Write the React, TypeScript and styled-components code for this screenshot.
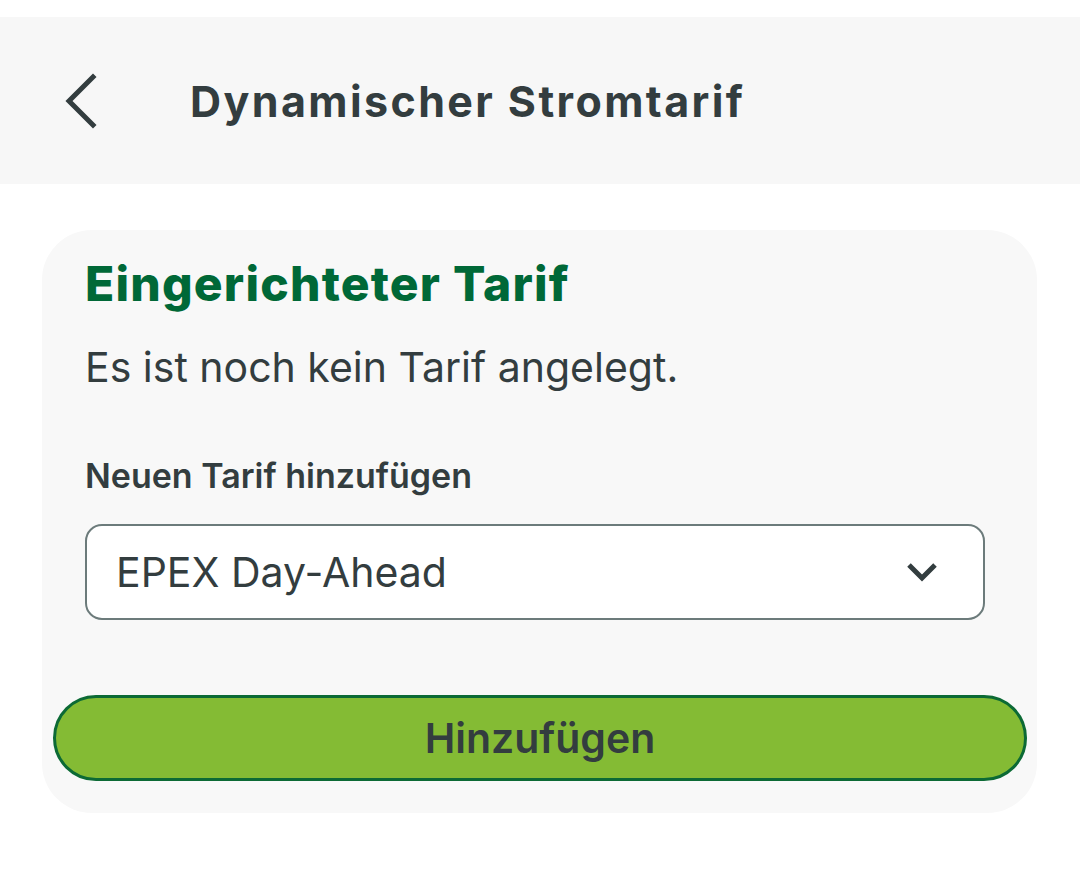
import React from "react";
import styled, { createGlobalStyle } from "styled-components";

const Global = createGlobalStyle`
  html, body { margin: 0; padding: 0; background: #ffffff; }
  body { font-family: Inter, "Noto Sans", sans-serif; color: #333d3f; }
`;

const Page = styled.div`
  display: flex;
  flex-direction: column;
  padding-top: 17px;
`;

const Header = styled.header`
  display: flex;
  align-items: center;
  height: 167px;
  background: #f7f7f7;
  padding-left: 60px;
`;

const BackButton = styled.button`
  display: flex;
  align-items: center;
  justify-content: center;
  width: 40px;
  height: 60px;
  padding: 0;
  border: none;
  background: transparent;
  color: #333d3f;
  cursor: pointer;
`;

const Title = styled.h1`
  margin: 0 0 0 90px;
  font-family: Inter, sans-serif;
  font-weight: 700;
  font-size: 43px;
  letter-spacing: 2.4px;
  color: #333d3f;
`;

const Card = styled.section`
  display: flex;
  flex-direction: column;
  margin: 46px 43px 0 42px;
  padding: 24px 10px 32px 11px;
  background: #f8f8f8;
  border-radius: 50px;
`;

const Inner = styled.div`
  display: flex;
  flex-direction: column;
  padding: 0 42px 0 32px;
`;

const CardTitle = styled.h2`
  margin: 0;
  font-family: Inter, sans-serif;
  font-weight: 800;
  font-size: 48px;
  line-height: 60px;
  letter-spacing: 1.2px;
  color: #006837;
`;

const Body = styled.p`
  margin: 27px 0 0;
  font-family: Inter, sans-serif;
  font-weight: 400;
  font-size: 41px;
  line-height: 52px;
  color: #333d3f;
`;

const Label = styled.label`
  margin-top: 63px;
  font-family: Inter, sans-serif;
  font-weight: 600;
  font-size: 34px;
  line-height: 40px;
  color: #333d3f;
`;

const Select = styled.div`
  display: flex;
  align-items: center;
  justify-content: space-between;
  margin-top: 28px;
  height: 96px;
  box-sizing: border-box;
  padding: 0 45px 0 29px;
  background: #ffffff;
  border: 2.5px solid #6c7b7b;
  border-radius: 17px;
  font-family: Inter, sans-serif;
  font-size: 41px;
  color: #333d3f;
`;

const Button = styled.button`
  margin-top: 75px;
  height: 86px;
  border-radius: 43px;
  border: 3px solid #0c6a35;
  background: #84bb34;
  font-family: Inter, sans-serif;
  font-weight: 600;
  font-size: 41px;
  color: #333d3f;
  cursor: pointer;
`;

export default function App() {
  return (
    <>
      <Global />
      <Page>
        <Header>
          <BackButton aria-label="Zurück">
            <svg width="34" height="56" viewBox="0 0 34 56" fill="none">
              <path d="M30 4 L6 28 L30 52" stroke="#333d3f" strokeWidth="5" strokeLinecap="square" />
            </svg>
          </BackButton>
          <Title>Dynamischer Stromtarif</Title>
        </Header>
        <Card>
          <Inner>
            <CardTitle>Eingerichteter Tarif</CardTitle>
            <Body>Es ist noch kein Tarif angelegt.</Body>
            <Label>Neuen Tarif hinzufügen</Label>
            <Select>
              <span>EPEX Day-Ahead</span>
              <svg width="32" height="20" viewBox="0 0 32 20" fill="none">
                <path d="M3 3 L16 16 L29 3" stroke="#333d3f" strokeWidth="5" />
              </svg>
            </Select>
          </Inner>
          <Button>Hinzufügen</Button>
        </Card>
      </Page>
    </>
  );
}
